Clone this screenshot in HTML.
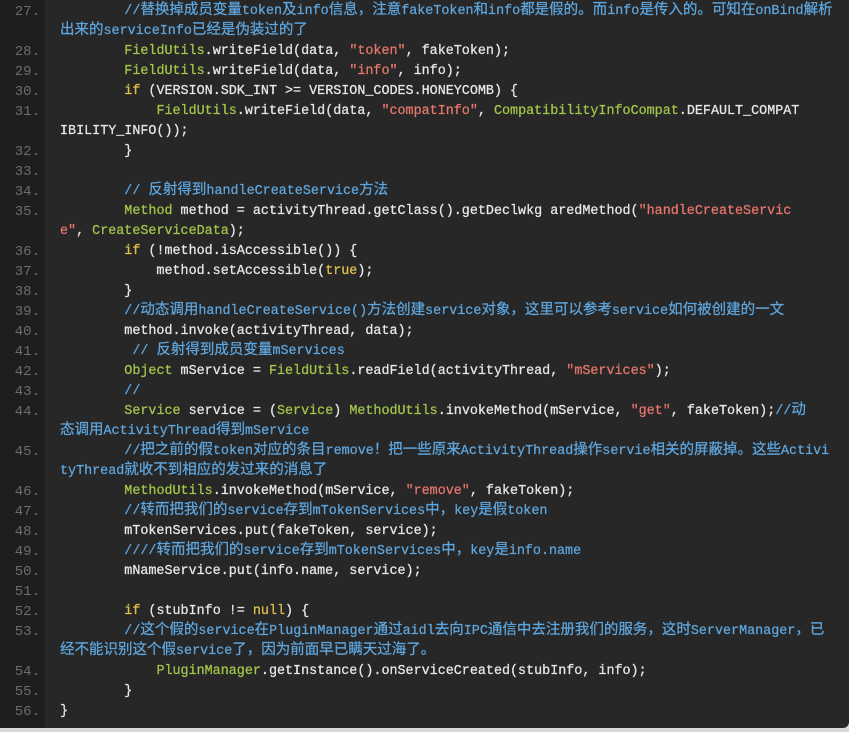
<!DOCTYPE html>
<html><head><meta charset="utf-8"><style>
html,body{margin:0;padding:0;background:#d8d8d8;width:849px;height:732px;overflow:hidden}
#w{position:absolute;left:0;top:0;width:849px;height:728px;background:#272727;border-bottom-right-radius:6px;overflow:hidden}
#g{position:absolute;left:0;top:0;width:45px;height:728px;background:#1e1e1e}
pre{margin:0;position:absolute;top:2px;font-family:"Liberation Mono","Noto Sans CJK SC",monospace;font-size:13.4px;line-height:20px;white-space:pre;color:#e8e8e8;-webkit-text-stroke:0.25px currentColor}
#n{left:0;width:40px;text-align:right;color:#6c6c6c;font-size:14px;-webkit-text-stroke:0}
#c{left:60px}
b{font-weight:normal;font-size:14.5px;letter-spacing:0;line-height:0;font-family:"Noto Sans CJK SC",sans-serif}
.c{color:#5ea6de}.g{color:#a3c64a}.k{color:#e3c14e}.s{color:#e7766c}
</style></head><body><div id="w"><div id="g"></div>
<pre id="n">27.

28.
29.
30.
31.

32.
33.
34.
35.

36.
37.
38.
39.
40.
41.
42.
43.
44.

45.

46.
47.
48.
49.
50.
51.
52.
53.

54.
55.
56.</pre>
<pre id="c"><span class="c">        //<b>替换掉成员变量</b>token<b>及</b>info<b>信息，注意</b>fakeToken<b>和</b>info<b>都是假的。而</b>info<b>是传入的。可知在</b>onBind<b>解析</b>
<b>出来的</b>serviceInfo<b>已经是伪装过的了</b></span>
        <span class="g">FieldUtils</span>.writeField(data, <span class="s">"token"</span>, fakeToken);
        <span class="g">FieldUtils</span>.writeField(data, <span class="s">"info"</span>, info);
        <span class="k">if</span> (VERSION.SDK_INT &gt;= VERSION_CODES.HONEYCOMB) {
            <span class="g">FieldUtils</span>.writeField(data, <span class="s">"compatInfo"</span>, <span class="g">CompatibilityInfoCompat</span>.DEFAULT_COMPAT
IBILITY_INFO());
        }

        <span class="c">// <b>反射得到</b>handleCreateService<b>方法</b></span>
        <span class="g">Method</span> method = activityThread.getClass().getDeclwkg aredMethod(<span class="s">"handleCreateServic
e"</span>, <span class="g">CreateServiceData</span>);
        <span class="k">if</span> (!method.isAccessible()) {
            method.setAccessible(<span class="k">true</span>);
        }
        <span class="c">//<b>动态调用</b>handleCreateService()<b>方法创建</b>service<b>对象，这里可以参考</b>service<b>如何被创建的一文</b></span>
        method.invoke(activityThread, data);
         <span class="c">// <b>反射得到成员变量</b>mServices</span>
        <span class="g">Object</span> mService = <span class="g">FieldUtils</span>.readField(activityThread, <span class="s">"mServices"</span>);
        <span class="c">//</span>
        <span class="g">Service</span> service = (<span class="g">Service</span>) <span class="g">MethodUtils</span>.invokeMethod(mService, <span class="s">"get"</span>, fakeToken);<span class="c">//<b>动</b></span>
<span class="c"><b>态调用</b>ActivityThread<b>得到</b>mService</span>
        <span class="c">//<b>把之前的假</b>token<b>对应的条目</b>remove<b>！把一些原来</b>ActivityThread<b>操作</b>servie<b>相关的屏蔽掉。这些</b>Activi</span>
<span class="c">tyThread<b>就收不到相应的发过来的消息了</b></span>
        <span class="g">MethodUtils</span>.invokeMethod(mService, <span class="s">"remove"</span>, fakeToken);
        <span class="c">//<b>转而把我们的</b>service<b>存到</b>mTokenServices<b>中，</b>key<b>是假</b>token</span>
        mTokenServices.put(fakeToken, service);
        <span class="c">////<b>转而把我们的</b>service<b>存到</b>mTokenServices<b>中，</b>key<b>是</b>info.name</span>
        mNameService.put(info.name, service);

        <span class="k">if</span> (stubInfo != <span class="k">null</span>) {
        <span class="c">//<b>这个假的</b>service<b>在</b>PluginManager<b>通过</b>aidl<b>去向</b>IPC<b>通信中去注册我们的服务，这时</b>ServerManager<b>，已</b></span>
<span class="c"><b>经不能识别这个假</b>service<b>了，因为前面早已瞒天过海了。</b></span>
            <span class="g">PluginManager</span>.getInstance().onServiceCreated(stubInfo, info);
        }
}</pre></div></body></html>
